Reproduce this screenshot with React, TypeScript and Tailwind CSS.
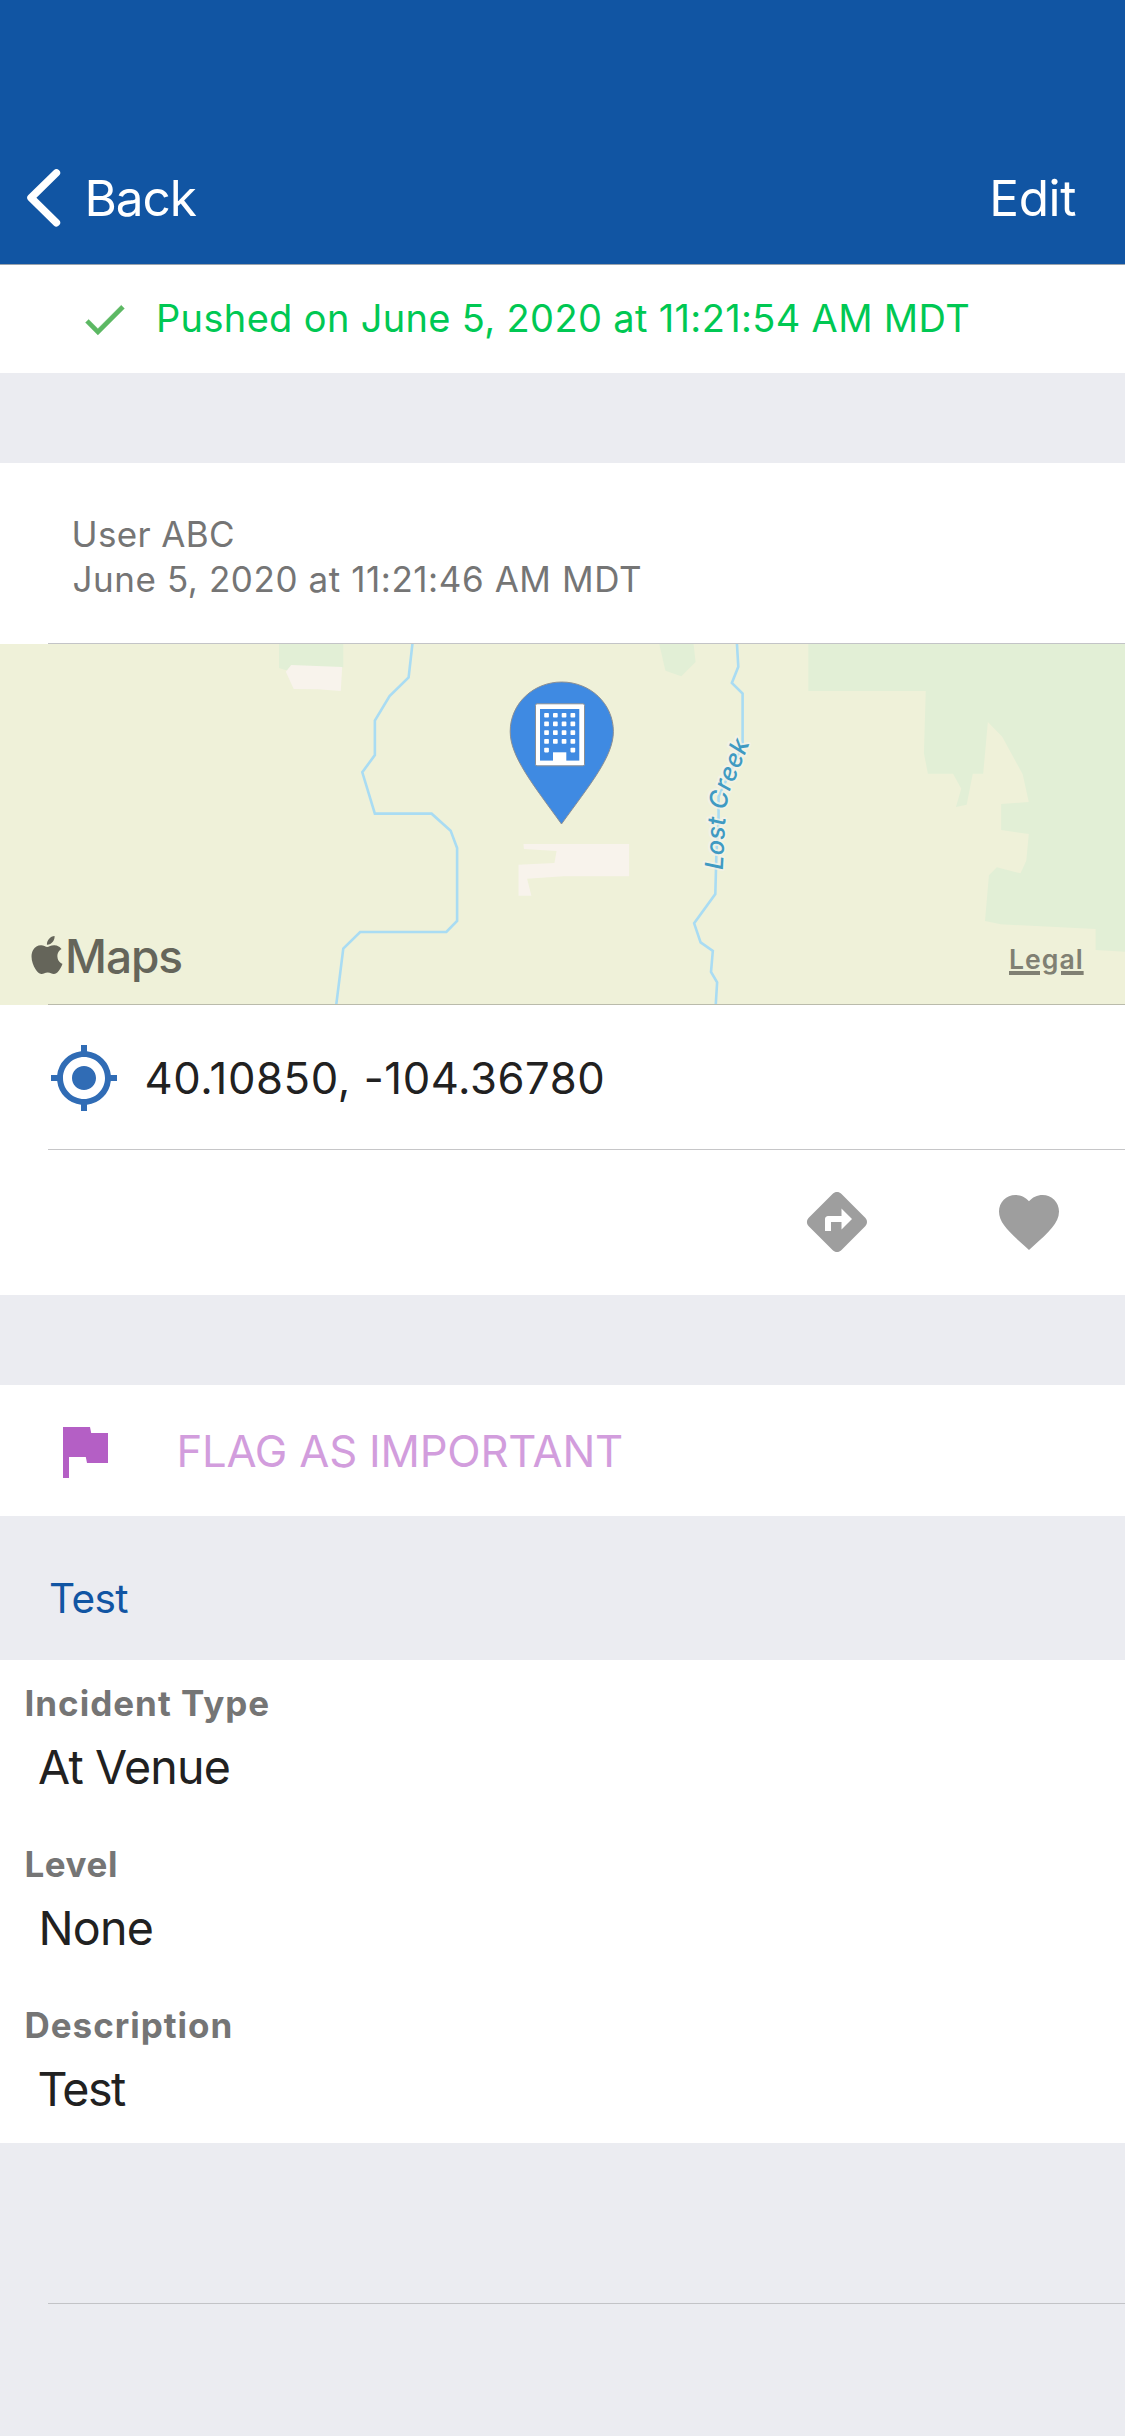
import { MdDirections, MdFavorite, MdFlag, MdMyLocation } from 'react-icons/md'
import { SiApple } from 'react-icons/si'

const windowColumns = [544.2, 553, 561.7, 570.5]
const windowRows = [68.9, 77.6, 86.3, 95, 103.7]

const fields = [
  { label: 'Incident Type', value: 'At Venue', labelClass: 'tracking-[1px]', valueClass: 'ml-[38px] tracking-[-0.85px]' },
  { label: 'Level', value: 'None', labelClass: 'tracking-[0.55px]', valueClass: 'ml-[38.5px] tracking-[-0.8px]' },
  { label: 'Description', value: 'Test', labelClass: 'tracking-[0.98px]', valueClass: 'ml-[37.5px] tracking-[-1.6px]' },
]

function BuildingPin() {
  return (
    <g>
      <path
        d="M561.7 38C590 38 613.4 59.5 613.4 87.5C613.4 112.5 590 140.5 561.5 180C533 140.5 510.2 112.5 510.2 87.5C510.2 59.5 533.5 38 561.7 38Z"
        fill="#3f8ae2"
        stroke="#8b8f94"
        strokeWidth="1"
      />
      <rect x="535.5" y="59.8" width="49" height="62" rx="1.5" fill="#fff" stroke="#8b8f94" strokeWidth="1" />
      <rect x="540" y="65" width="39.3" height="51.6" fill="#3f8ae2" />
      <rect x="553" y="108.3" width="13.3" height="9" fill="#fff" />
      {windowRows.map((y, row) =>
        windowColumns.map((x, col) =>
          row === 4 && (col === 1 || col === 2) ? null : (
            <rect key={`${row}-${col}`} x={x} y={y} width="4.7" height="4.7" rx="0.8" fill="#fff" />
          ),
        ),
      )}
    </g>
  )
}

function MapView() {
  return (
    <div className="relative h-[361px] bg-[#eff1d9]">
      <svg className="block h-[361px] w-[1125px]" viewBox="0 0 1125 361">
        {/* Western half: parcels and the unnamed stream */}
        <g transform="translate(0 -4) scale(0.35907 0.33333)">
          <path d="M777 8H956V82L810 90L795 90L777 84Z" fill="#e2efd6" />
          <path d="M811 75L953 81L949 153L885 148L818 147L796 95Z" fill="#f8f3ec" />
          <path
            d="M1149 8L1138 112L1085 168L1044 242V345L1009 397L1044 521H1202L1255 572L1273 624V843L1243 876H1003L956 926L936 1098"
            fill="none"
            stroke="#a9dcf3"
            strokeWidth="2.6"
            vectorEffect="non-scaling-stroke"
          />
          <path
            d="M1458 612H1752V709H1568L1468 716L1480 767H1444V674L1544 669L1550 633L1459 627Z"
            fill="#f8f3ec"
          />
        </g>
        {/* Eastern half: woodland and Lost Creek */}
        <g transform="translate(562 -4) scale(0.35907 0.33333)">
          <path d="M270 8L288 92L332 109L372 66L366 8Z" fill="#e2efd6" />
          <path
            d="M686 8H1575V936L1486 930V867L1222 853L1178 843L1189 706L1211 682L1277 700L1293 662L1300 582L1223 570V492L1300 486L1283 403L1226 290L1186 246L1173 401H1144L1127 494L1097 501L1112 446L1089 401H1019L1008 340L1013 153H686Z"
            fill="#e2efd6"
          />
          <path
            d="M487 8L491 80L473 129L503 161V315L436 470V540L430 640L427 762L368 850L386 907L420 933L415 996L432 1027L428 1098"
            fill="none"
            stroke="#a9dcf3"
            strokeWidth="2.6"
            vectorEffect="non-scaling-stroke"
          />
        </g>
        <path id="creek-label" d="M722.8 226L725 181C726 160 729 146 735.5 134L760 73" fill="none" />
        <text
          className="font-['Inter'] text-[25px] font-medium italic tracking-[0.35px]"
          fill="#3f9ac2"
          stroke="#f3f3ea"
          strokeWidth="4"
          strokeLinejoin="round"
          paintOrder="stroke"
          strokeOpacity="0.8"
        >
          <textPath href="#creek-label">Lost Creek</textPath>
        </text>
        <BuildingPin />
      </svg>
      <div className="absolute top-[292px] left-[28px] flex text-[#65655a]">
        <SiApple className="size-[38px]" />
        <span className="-ml-px text-[46px] leading-[40px] font-medium tracking-[-1.1px]">Maps</span>
      </div>
      <span className="absolute top-[299px] left-[1009px] text-[26.6px] leading-[32px] font-semibold tracking-[1px] text-[#808073] underline decoration-[3.5px] underline-offset-[2px]">
        Legal
      </span>
      <div className="absolute bottom-0 left-[48px] h-px w-[1077px] bg-[#babbab]" />
    </div>
  )
}

export default function App() {
  return (
    <div className="flex h-[2436px] w-[1125px] flex-col overflow-hidden bg-[#ebecf1] font-['Inter',sans-serif] whitespace-nowrap text-[#212121]">
      <header className="flex h-[265px] items-center justify-between border-b border-[#9aa3ad] bg-[#1155a3] pt-[132px] pr-[49px] pl-[24px] text-[49.5px] leading-[60px] text-white">
        <div className="flex items-center">
          <svg className="h-[64px] w-[40px]" viewBox="24 166 40 64" fill="none" stroke="#fff" strokeWidth="7.5" strokeLinecap="round" strokeLinejoin="round">
            <path d="M56.4 172.9L31 197.8L56.4 222.7" />
          </svg>
          <span className="ml-[20.5px] tracking-[-1.1px]">Back</span>
        </div>
        <span className="tracking-[-0.4px]">Edit</span>
      </header>

      <div className="flex h-[108px] items-center bg-white pb-[2px] pl-[78px]">
        <svg className="mt-[2px] h-[53px] w-[53px] text-[#5cb863]" viewBox="0 0 24 24" fill="currentColor" stroke="currentColor" strokeWidth="0.2" strokeLinejoin="round">
          <path d="M9 16.17L4.83 12L3.41 13.41L9 19L21 7L19.59 5.59Z" />
        </svg>
        <span className="ml-[25px] text-[38px] leading-[46px] tracking-[0.34px] text-[#00c853]">
          Pushed on June 5, 2020 at 11:21:54 AM MDT
        </span>
      </div>

      <section className="mt-[90px] flex flex-col bg-white">
        <div className="h-[180px] pt-[49px] pl-[71.5px] text-[35px] leading-[45px] text-[#757575]">
          <p className="tracking-[0.36px]">User ABC</p>
          <p className="ml-px tracking-[0.57px]">June 5, 2020 at 11:21:46 AM MDT</p>
        </div>
        <div className="ml-[48px] h-px bg-[#c3c4c7]" />
        <MapView />
        <div className="flex h-[144px] items-center pt-[2px] pl-[48px]">
          <MdMyLocation className="size-[72px] text-[#306cb5]" />
          <span className="mt-[2px] ml-[24.5px] text-[43.6px] leading-[54px] tracking-[0.59px]">40.10850, -104.36780</span>
        </div>
        <div className="ml-[48px] h-px bg-[#c6c6c8]" />
        <div className="flex h-[145px] items-center justify-end gap-[120px] pr-[60px] pb-[2px] text-[#9e9e9e]">
          <MdDirections className="size-[72px]" />
          <MdFavorite className="size-[72px]" />
        </div>
      </section>

      <div className="mt-[90px] flex h-[131px] items-center bg-white pt-px pl-[48px]">
        <MdFlag className="size-[72px] text-[#b45fc5]" />
        <span className="mt-[2px] ml-[56.5px] text-[43.6px] leading-[54px] tracking-[-0.2px] text-[#d29ddd]">FLAG AS IMPORTANT</span>
      </div>

      <h2 className="h-[144px] pt-[59px] pl-[49px] text-[40.6px] leading-[48px] tracking-[-0.6px] text-[#1155a3]">Test</h2>

      <dl className="h-[483px] bg-white">
        {fields.map((f) => (
          <div key={f.label} className="h-[161px] pt-[21px]">
            <dt className={`ml-[24.5px] text-[35px] leading-[44px] font-bold text-[#757575] ${f.labelClass}`}>{f.label}</dt>
            <dd className={`mt-[12px] text-[46.6px] leading-[60px] ${f.valueClass}`}>{f.value}</dd>
          </div>
        ))}
      </dl>

      <div className="mt-[160px] ml-[48px] h-px shrink-0 bg-[#c2c3c7]" />
    </div>
  )
}
